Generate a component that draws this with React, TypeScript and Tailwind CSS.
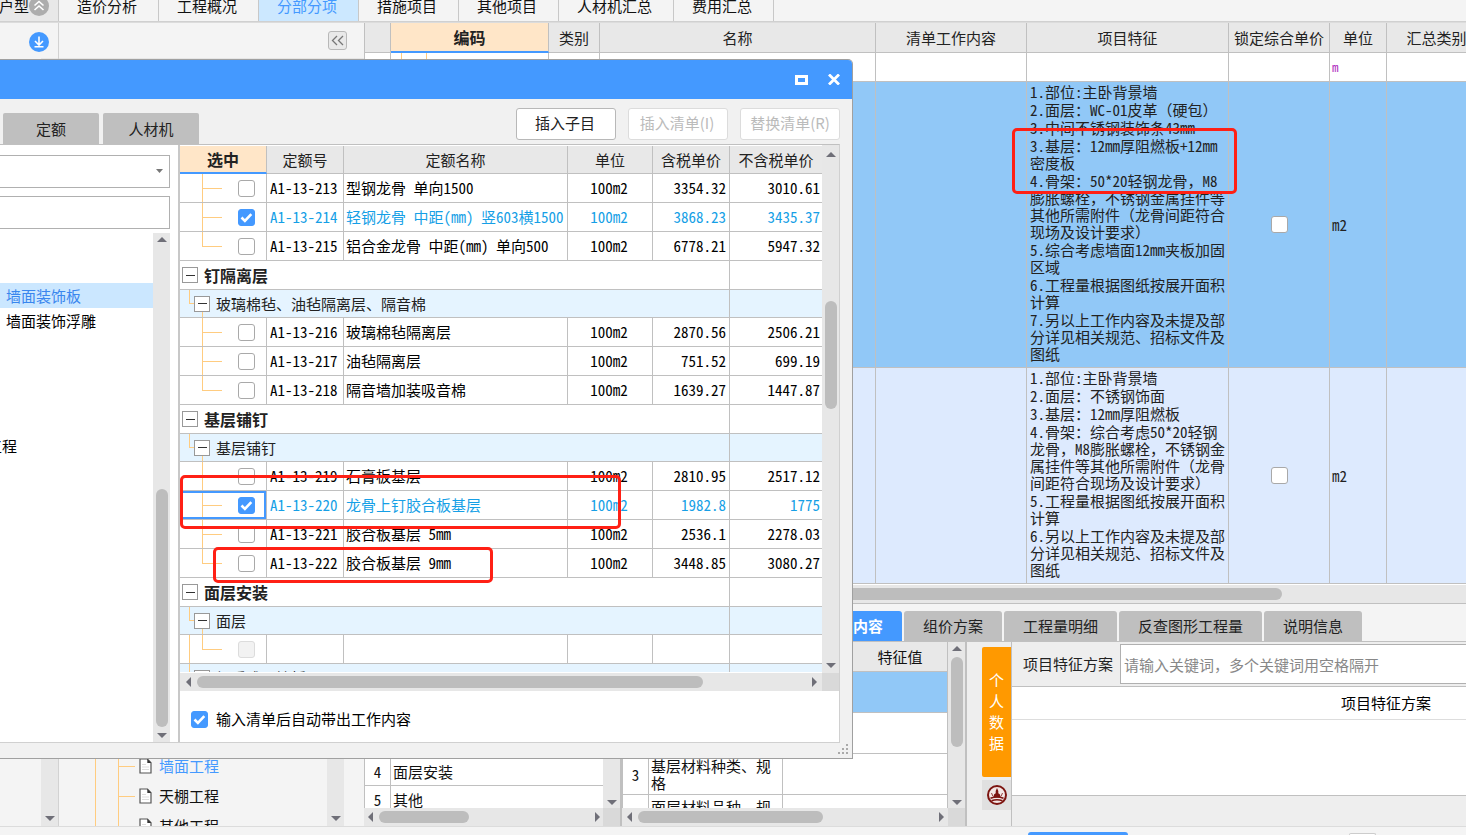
import { useState, type ReactNode } from 'react';
import clsx from 'clsx';

type Dir = 'up' | 'down' | 'left' | 'right';

const arrowPoints: Record<Dir, string> = {
  up: '0,8 5,3 10,8',
  down: '0,3 5,8 10,3',
  left: '8,0 3,5 8,10',
  right: '3,0 8,5 3,10',
};

function Arrow({ dir }: { dir: Dir }) {
  return (
    <svg className="size-[10px] shrink-0" viewBox="0 0 10 10" aria-hidden="true">
      <polygon points={arrowPoints[dir]} fill="#6f6f78" />
    </svg>
  );
}

function VScroll({ className, thumb, children }: { className?: string; thumb?: string; children?: ReactNode }) {
  return (
    <div className={clsx('flex w-[17px] shrink-0 flex-col items-center bg-[#e7e7e7] py-px', className)}>
      <Arrow dir="up" />
      <div className="flex flex-1 flex-col">
        {thumb && <div className={clsx('w-3 rounded-full bg-[#bdbdbd]', thumb)} />}
        {children}
      </div>
      <Arrow dir="down" />
    </div>
  );
}

function HScroll({ thumb, pad = 'px-[3px]', end = true }: { thumb: string; pad?: string; end?: boolean }) {
  return (
    <div className={clsx('flex h-[18px] flex-1 items-center gap-1 bg-[#e7e7e7]', pad)}>
      <Arrow dir="left" />
      <div className="flex-1">
        <div className={clsx('h-3 rounded-full bg-[#bdbdbd]', thumb)} />
      </div>
      {end && <Arrow dir="right" />}
    </div>
  );
}

function Checkbox({ id, label, checked, disabled }: { id?: string; label?: string; checked?: boolean; disabled?: boolean }) {
  const [on, setOn] = useState(!!checked);
  return (
    <span className="relative block size-[17px] shrink-0">
      <input
        id={id}
        type="checkbox"
        aria-label={label}
        checked={on}
        disabled={disabled}
        onChange={() => setOn(!on)}
        className="block size-[17px] appearance-none rounded-[3px] border border-[#a9a9a9] bg-white checked:border-[#4499ff] checked:bg-[#4499ff] disabled:border-[#dcdcdc] disabled:bg-[#f2f2f2]"
      />
      {on && (
        <svg className="pointer-events-none absolute inset-0 size-[17px]" viewBox="0 0 17 17" fill="none" stroke="#fff" strokeWidth="2.6">
          <path d="M3.5 8.5l3.4 3.4 6.4-6.8" />
        </svg>
      )}
    </span>
  );
}

const topTabs = ['造价分析', '工程概况', '分部分项', '措施项目', '其他项目', '人材机汇总', '费用汇总'];

function TopTabs() {
  return (
    <nav className="flex h-[22px] shrink-0 items-end overflow-hidden border-b border-[#d0d0d0]">
      <div className="flex h-[30px] w-[59px] shrink-0 items-center justify-end border-r border-[#c8c8c8] bg-[#e8e8e8] pr-[9px]">
        <span className="whitespace-nowrap">户型</span>
        <svg className="size-5 shrink-0" viewBox="0 0 20 20" fill="none">
          <circle cx="10" cy="10" r="10" fill="#adadad" />
          <path d="M5.5 9.5L10 5.5l4.5 4M5.5 14l4.5-4 4.5 4" stroke="#fff" strokeWidth="1.6" />
        </svg>
      </div>
      {topTabs.map((t) => (
        <a
          key={t}
          href="#"
          className={clsx(
            'flex h-[30px] shrink-0 items-center border-r border-[#c8c8c8] px-[18px]',
            t === '分部分项' ? 'bg-[#cce8ff] text-[#4499ff]' : 'bg-[#f4f4f4]',
          )}
        >
          <span className={t.length === 5 ? 'w-[78px]' : 'w-[63px]'}>{t}</span>
        </a>
      ))}
    </nav>
  );
}

function FileIcon() {
  return (
    <svg className="h-4 w-[13px] shrink-0" viewBox="0 0 13 16" fill="none">
      <path d="M1 1h7.5L12 4.8V15H1z" fill="#fff" stroke="#555" strokeWidth="1.2" />
      <path d="M8.3 1v4h3.9z" fill="#333" />
      <path d="M3 6.5h4M3 9h7M3 11.5h7" stroke="#ddd" />
    </svg>
  );
}

function SideRail() {
  return (
    <div className="flex w-[59px] shrink-0 flex-col border-r border-[#d2d2d2]">
      <button aria-label="下载" className="mt-[9px] ml-[29px] size-5">
        <svg viewBox="0 0 20 20" fill="none">
          <circle cx="10" cy="10" r="10" fill="#4499ff" />
          <path d="M10 4.5v8M6 9l4 4 4-4M5.5 14.8h9" stroke="#fff" strokeWidth="1.6" />
        </svg>
      </button>
      <VScroll className="mt-[6px] flex-1 self-end pb-[3px]" />
    </div>
  );
}

const projectTree = ['墙面工程', '天棚工程', '其他工程'];

function ProjectTree() {
  return (
    <aside className="flex w-[305px] shrink-0 flex-col">
      <div className="flex h-9 shrink-0 items-center justify-end border-b border-[#e6e6e6] pr-[17px]">
        <button aria-label="收起" className="flex size-[19px] items-center justify-center rounded-[3px] border border-[#b8b8b8] bg-[#e9e9e9]">
          <svg className="h-[11px] w-[13px]" viewBox="0 0 13 11" fill="none" stroke="#777" strokeWidth="1.3">
            <path d="M6 1L1.5 5.5 6 10M12 1L7.5 5.5 12 10" />
          </svg>
        </button>
      </div>
      <div className="flex min-h-0 flex-1">
        <div className="flex min-w-0 flex-1 flex-col justify-end overflow-hidden pl-[36px]">
          <div className="flex h-[75px] border-l border-[#ffcc80] pl-[22px]">
            <ul className="flex-1 border-l border-[#ffcc80]">
              {projectTree.map((t, i) => (
                <li key={t} className="flex h-[30px] items-center">
                  <span className="mr-1 h-px w-4 bg-[#ffcc80]" />
                  <FileIcon />
                  <a href="#" className={clsx('ml-[7px]', i === 0 && 'text-[#4499ff]')}>{t}</a>
                </li>
              ))}
            </ul>
          </div>
        </div>
        <VScroll className="mr-5 pb-[3px]" />
      </div>
    </aside>
  );
}

const feature1 = [
  '1.部位:主卧背景墙',
  '2.面层：WC-01皮革（硬包）',
  '3.中间不锈钢装饰条43mm',
  '3.基层：12mm厚阻燃板+12mm\n密度板',
  '4.骨架：50*20轻钢龙骨，M8\n膨胀螺栓，不锈钢金属挂件等\n其他所需附件（龙骨间距符合\n现场及设计要求）',
  '5.综合考虑墙面12mm夹板加固\n区域',
  '6.工程量根据图纸按展开面积\n计算',
  '7.另以上工作内容及未提及部\n分详见相关规范、招标文件及\n图纸',
];

const feature2 = [
  '1.部位:主卧背景墙',
  '2.面层：不锈钢饰面',
  '3.基层：12mm厚阻燃板',
  '4.骨架：综合考虑50*20轻钢\n龙骨，M8膨胀螺栓，不锈钢金\n属挂件等其他所需附件（龙骨\n间距符合现场及设计要求）',
  '5.工程量根据图纸按展开面积\n计算',
  '6.另以上工作内容及未提及部\n分详见相关规范、招标文件及\n图纸',
];

function Features({ items }: { items: string[] }) {
  return (
    <div className="flex flex-col gap-px pt-px pl-[3px] leading-[17px] whitespace-pre">
      {items.map((f) => (
        <p key={f}>{f}</p>
      ))}
    </div>
  );
}

const th = 'border-r border-b border-[#c0c0c0] bg-[#e8e8e8] p-0 font-normal';
const td = 'border-r border-b border-[#c0c0c0] p-0';

function BillTable() {
  return (
    <table className="w-[1123px] table-fixed border-separate border-spacing-0 border-l border-[#c0c0c0] text-[#222]">
      <colgroup>
        <col className="w-[26px]" />
        <col className="w-[158px]" />
        <col className="w-[51px]" />
        <col className="w-[276px]" />
        <col className="w-[151px]" />
        <col className="w-[202px]" />
        <col className="w-[101px]" />
        <col className="w-[57px]" />
        <col />
      </colgroup>
      <thead>
        <tr className="h-[30px] whitespace-nowrap">
          <th className={th} />
          <th className="border-r border-b-2 border-r-[#c0c0c0] border-b-[#4499ff] bg-[#ffe6c8] p-0 text-base leading-5 font-bold">编码</th>
          <th className={th}>类别</th>
          <th className={th}>名称</th>
          <th className={th}>清单工作内容</th>
          <th className={th}>项目特征</th>
          <th className={th}>锁定综合单价</th>
          <th className={th}>单位</th>
          <th className={th}>汇总类别</th>
        </tr>
      </thead>
      <tbody className="font-['Noto_Sans_Mono_CJK_SC','Noto_Sans_CJK_SC',monospace]">
        <tr className="h-[29px] bg-white">
          <td className={td} />
          <td className={td}>
            <div className="ml-[10px] h-7 w-[26px] border-x border-[#ffcc80]" />
          </td>
          <td className={td} />
          <td className={td} />
          <td className={td} />
          <td className={td} />
          <td className={td} />
          <td className={clsx(td, 'pl-[2px] text-[13px] leading-4 text-[#b030c0]')}>m</td>
          <td className={td} />
        </tr>
        {[feature1, feature2].map((items, i) => (
          <tr key={i} className={i === 0 ? 'h-[286px] bg-[#91c8f7]' : 'h-[216px] bg-[#ddeafe]'}>
            <td className={td} />
            <td className={td} />
            <td className={td} />
            <td className={td} />
            <td className={td} />
            <td className={clsx(td, 'align-top')}>
              <Features items={items} />
            </td>
            <td className={td}>
              <div className="flex justify-center">
                <Checkbox label="锁定综合单价" />
              </div>
            </td>
            <td className={clsx(td, 'pl-[2px]')}>m2</td>
            <td className={td} />
          </tr>
        ))}
      </tbody>
    </table>
  );
}

const detailTabs = ['特征及内容', '组价方案', '工程量明细', '反查图形工程量', '说明信息'];

function DetailTabs() {
  return (
    <div className="flex h-[38px] shrink-0 items-end gap-[2px] border-b border-[#c0c0c0] pl-[425px]">
      {detailTabs.map((t, i) => (
        <button
          key={t}
          className={clsx(
            'h-[30px] shrink-0 rounded-t-[3px] px-[19px]',
            i === 0 ? 'bg-[#4499ff] font-bold text-white' : 'bg-[#bfbfbf] text-[#222]',
          )}
        >
          {t}
        </button>
      ))}
    </div>
  );
}

function WorkPanel() {
  const rows = ['', '', '', '面层安装', '其他'];
  return (
    <div className="flex w-[258px] shrink-0 flex-col border-r-2 border-[#c0c0c0]">
      <div className="flex min-h-0 flex-1">
        <div className="min-w-0 flex-1 overflow-hidden bg-white">
          <table className="w-full table-fixed border-separate border-spacing-0 border-l border-[#c0c0c0]">
            <thead>
              <tr className="h-8">
                <th className={clsx(th, 'w-[26px]')} />
                <th className={th} />
              </tr>
            </thead>
            <tbody className="font-['Noto_Sans_Mono_CJK_SC','Noto_Sans_CJK_SC',monospace]">
              {rows.map((r, i) => (
                <tr key={i} className="h-7">
                  <td className={clsx(td, 'text-center')}>{r && i + 1}</td>
                  <td className="border-b border-[#c0c0c0] p-0 pl-[2px]">{r}</td>
                </tr>
              ))}
            </tbody>
          </table>
        </div>
        <VScroll />
      </div>
      <div className="flex">
        <HScroll thumb="w-[90px]" pad="px-px" />
        <div className="w-[17px] bg-[#d9d9d9]" />
      </div>
    </div>
  );
}

function FeaturePanel() {
  const rows = ['', '', '基层材料种类、规格', '面层材料品种、规格'];
  return (
    <div className="flex w-[345px] shrink-0 flex-col border-r-2 border-[#c0c0c0]">
      <div className="flex min-h-0 flex-1">
        <div className="min-w-0 flex-1 overflow-hidden bg-white">
          <table className="w-full table-fixed border-separate border-spacing-0 border-l border-[#c0c0c0]">
            <thead>
              <tr className="h-[30px]">
                <th className={clsx(th, 'w-[26px]')} />
                <th className={clsx(th, 'w-[134px]')} />
                <th className={clsx(th, 'pl-[70px]')}>特征值</th>
              </tr>
            </thead>
            <tbody className="font-['Noto_Sans_Mono_CJK_SC','Noto_Sans_CJK_SC',monospace] leading-[17px]">
              {rows.map((r, i) => (
                <tr key={i} className={clsx('h-[41px]', i === 0 && 'bg-[#91c8f7]')}>
                  <td className={clsx(td, 'text-center')}>{r && i + 1}</td>
                  <td className={clsx(td, 'pr-[2px] pl-[2px]')}>{r}</td>
                  <td className={td} />
                </tr>
              ))}
            </tbody>
          </table>
        </div>
        <VScroll thumb="mt-1 h-[90px]" />
      </div>
      <div className="flex">
        <HScroll thumb="w-[185px]" pad="px-[2px]" />
        <div className="w-[17px] bg-[#d9d9d9]" />
      </div>
    </div>
  );
}

function PlanPanel() {
  return (
    <div className="flex min-w-0 flex-1 bg-[#eee]">
      <div className="flex w-[45px] shrink-0 flex-col items-end gap-[3px] border-r border-[#c0c0c0] pt-[5px]">
        <button className="flex h-[130px] w-[29px] flex-col items-center justify-center rounded-l-[2px] bg-[#ff9900] pb-[2px] leading-[21px] text-white">
          {['个', '人', '数', '据'].map((c) => (
            <span key={c}>{c}</span>
          ))}
        </button>
        <button aria-label="数据库" className="flex h-[30px] w-[29px] items-center justify-center bg-[#e0e0e0]">
          <svg className="size-5" viewBox="0 0 20 20" fill="none">
            <circle cx="10" cy="10" r="9" fill="#f3e6e4" stroke="#7c1410" strokeWidth="2" />
            <path d="M10 3l1.3 3v2.2l1.5 1 1 3.300H6.200l1-3.300 1.500-1V6z" fill="#7c1410" />
            <path d="M3.500 13.200c4-1.600 9-1.600 13 0M4.500 15.800c3.500-1.400 7.500-1.400 11 0" stroke="#7c1410" strokeWidth="1.5" />
            <path d="M4.500 8l1.300 3M15.500 8l-1.300 3" stroke="#7c1410" strokeWidth="0.8" />
          </svg>
        </button>
      </div>
      <div className="flex min-w-0 flex-1 flex-col">
        <div className="flex h-[45px] shrink-0 items-center border-b border-[#c0c0c0] pl-[11px]">
          <label htmlFor="plan-key" className="shrink-0 text-[#222]">项目特征方案</label>
          <input
            id="plan-key"
            placeholder="请输入关键词，多个关键词用空格隔开"
            className="ml-[7px] h-10 min-w-0 flex-1 border border-r-0 border-[#b0b0b0] bg-white px-[3px] placeholder:text-[#888]"
          />
        </div>
        <div className="min-h-0 flex-1 overflow-hidden border-b border-[#c0c0c0] bg-white">
          <h3 className="flex h-[33px] w-[748px] items-center justify-center border-b border-[#ddd] text-black">
            项目特征方案
          </h3>
        </div>
        <div className="h-[30px] shrink-0" />
      </div>
    </div>
  );
}

type Row =
  | { kind: 'group' | 'sub'; name: string }
  | { kind: 'item'; code: string; name: string; unit: string; tax: string; net: string; on?: boolean; focus?: boolean; last?: boolean; off?: boolean };

const item = (code: string, name: string, tax: string, net: string, extra = {}): Row => ({
  kind: 'item', code, name, unit: '100m2', tax, net, ...extra,
});

const quotas: Row[] = [
  item('A1-13-213', '型钢龙骨 单向1500', '3354.32', '3010.61'),
  item('A1-13-214', '轻钢龙骨 中距(mm) 竖603横1500', '3868.23', '3435.37', { on: true }),
  item('A1-13-215', '铝合金龙骨 中距(mm) 单向500', '6778.21', '5947.32', { last: true }),
  { kind: 'group', name: '钉隔离层' },
  { kind: 'sub', name: '玻璃棉毡、油毡隔离层、隔音棉' },
  item('A1-13-216', '玻璃棉毡隔离层', '2870.56', '2506.21'),
  item('A1-13-217', '油毡隔离层', '751.52', '699.19'),
  item('A1-13-218', '隔音墙加装吸音棉', '1639.27', '1447.87', { last: true }),
  { kind: 'group', name: '基层铺钉' },
  { kind: 'sub', name: '基层铺钉' },
  item('A1-13-219', '石膏板基层', '2810.95', '2517.12'),
  item('A1-13-220', '龙骨上钉胶合板基层', '1982.8', '1775', { on: true, focus: true }),
  item('A1-13-221', '胶合板基层 5mm', '2536.1', '2278.03'),
  item('A1-13-222', '胶合板基层 9mm', '3448.85', '3080.27', { last: true }),
  { kind: 'group', name: '面层安装' },
  { kind: 'sub', name: '面层' },
  item('', '', '', '', { unit: '', last: true, off: true }),
  { kind: 'sub', name: '轻质成品墙板' },
];

function Toggle() {
  return (
    <button aria-label="折叠" className="flex size-4 shrink-0 items-center justify-center border border-[#999] bg-white">
      <span className="h-px w-[9px] bg-[#333]" />
    </button>
  );
}

function QuotaRow({ row }: { row: Row }) {
  if (row.kind === 'group') {
    return (
      <tr className="h-[29px] bg-white text-base leading-5 font-bold text-[#222]">
        <td colSpan={5} className={td}>
          <div className="flex items-center gap-[6px] pl-[2px]">
            <Toggle />
            {row.name}
          </div>
        </td>
        <td className="border-b border-[#c0c0c0] p-0" />
      </tr>
    );
  }
  if (row.kind === 'sub') {
    return (
      <tr className="h-7 bg-[#e5f4ff] text-[#222]">
        <td colSpan={5} className={clsx(td, 'relative')}>
          <span className="absolute top-0 left-[9px] h-[14px] w-[6px] border-b border-l border-[#ffcc80]" />
          <span className="absolute top-[14px] bottom-0 left-[22px] w-px bg-[#ffcc80]" />
          <div className="relative flex items-center gap-[6px] pl-[14px]">
            <Toggle />
            {row.name}
          </div>
        </td>
        <td className="border-b border-[#c0c0c0] p-0" />
      </tr>
    );
  }
  return (
    <tr className={clsx('h-[29px] bg-white', row.on ? 'text-[#169fe6]' : 'text-black')}>
      <td className={clsx(td, 'relative')}>
        <span className={clsx('absolute top-0 left-[22px] w-px bg-[#ffcc80]', row.last ? 'h-[14px]' : 'h-full')} />
        <span className="absolute top-[14px] left-[22px] h-px w-5 bg-[#ffcc80]" />
        {row.off && <span className="absolute top-0 left-[9px] h-full w-px bg-[#ffcc80]" />}
        {row.focus && <span className="absolute inset-0 border-2 border-[#4499ff]" />}
        <div className="relative pl-[58px]">
          <Checkbox label={row.code} checked={row.on} disabled={row.off} />
        </div>
      </td>
      <td className={clsx(td, 'pl-[3px]')}>{row.code}</td>
      <td className={clsx(td, 'pl-[2px]')}>{row.name}</td>
      <td className={clsx(td, 'pr-[2px] text-center')}>{row.unit}</td>
      <td className={clsx(td, 'pr-[3px] text-right')}>{row.tax}</td>
      <td className="border-b border-[#c0c0c0] p-0 pr-[2px] text-right">{row.net}</td>
    </tr>
  );
}

function QuotaTable() {
  return (
    <table className="w-full table-fixed border-separate border-spacing-0 whitespace-nowrap">
      <colgroup>
        <col className="w-[87px]" />
        <col className="w-[77px]" />
        <col className="w-[224px]" />
        <col className="w-[85px]" />
        <col className="w-[77px]" />
        <col />
      </colgroup>
      <thead className="text-[#222]">
        <tr className="h-7">
          <th className="border-r border-b-2 border-r-[#c0c0c0] border-b-[#4499ff] bg-[#ffe6c8] p-0 text-base leading-5 font-bold">选中</th>
          <th className={th}>定额号</th>
          <th className={th}>定额名称</th>
          <th className={th}>单位</th>
          <th className={th}>含税单价</th>
          <th className="border-b border-[#c0c0c0] bg-[#e8e8e8] p-0 font-normal">不含税单价</th>
        </tr>
      </thead>
      <tbody className="font-['Noto_Sans_Mono_CJK_SC','Noto_Sans_CJK_SC',monospace] leading-5">
        {quotas.map((row, i) => (
          <QuotaRow key={i} row={row} />
        ))}
      </tbody>
    </table>
  );
}

const chapters = ['', '', '墙面装饰板', '墙面装饰浮雕', '', '', '', '', '工程'];

function ChapterPane() {
  return (
    <div className="flex w-[178px] shrink-0 flex-col pt-[10px] pr-2">
      <div className="relative">
        <select aria-label="定额库" className="block h-[33px] w-full appearance-none border border-l-0 border-[#b0b0b0] bg-white" />
        <svg className="pointer-events-none absolute top-[14px] right-[7px] h-[5px] w-[7px]" viewBox="0 0 7 5">
          <polygon points="0,0 7,0 3.5,4" fill="#777" />
        </svg>
      </div>
      <input aria-label="查找" className="mt-2 h-[33px] w-full border border-l-0 border-[#b0b0b0] bg-white px-1" />
      <div className="mt-1 flex min-h-0 flex-1">
        <ul className="min-w-0 flex-1 overflow-hidden leading-[25px] whitespace-nowrap text-black">
          {chapters.map((c, i) => (
            <li
              key={i}
              className={clsx('h-[25px]', i === 2 && 'bg-[#cbe7ff] text-[#3a86ee]', i === 8 ? '-ml-[13px]' : 'pl-[6px]')}
            >
              {c}
            </li>
          ))}
        </ul>
        <VScroll className="pb-[2px]" thumb="mt-auto mb-[3px] h-[238px]" />
      </div>
    </div>
  );
}

function QuotaDialog() {
  return (
    <section className="absolute top-[59px] left-0 flex h-[700px] w-[853px] flex-col rounded-tr-[5px] border border-l-0 border-[#a0a0a0] bg-[#f1f1f1]">
      <header className="flex h-[39px] shrink-0 items-center justify-end gap-5 rounded-tr-[4px] bg-[#4499ff] pr-3">
        <button aria-label="最大化" className="h-[10px] w-[13px] border-[3px] border-white" />
        <button aria-label="关闭">
          <svg className="h-[11px] w-3" viewBox="0 0 12 11" stroke="#fff" strokeWidth="2.8">
            <path d="M1 .5l10 10M11 .5l-10 10" />
          </svg>
        </button>
      </header>
      <div className="flex h-[45px] shrink-0 items-end gap-1 pr-3 pl-[3px] text-[#222]">
        <button className="h-[31px] w-24 rounded-t-[2px] bg-[#bfbfbf]">定额</button>
        <button className="h-[31px] w-24 rounded-t-[2px] bg-[#bfbfbf]">人材机</button>
        <div className="mb-1 ml-auto flex gap-3">
          <button className="h-8 w-[100px] rounded-[3px] border border-[#b8b8b8] bg-white pr-[2px] pb-[2px]">插入子目</button>
          <button disabled className="h-8 w-[100px] rounded-[3px] border border-[#dcdcdc] bg-white pr-[2px] pb-[2px] text-[#bbb]">插入清单(I)</button>
          <button disabled className="h-8 w-[100px] rounded-[3px] border border-[#dcdcdc] bg-white pb-[2px] text-[#bbb]">替换清单(R)</button>
        </div>
      </div>
      <div className="mr-3 mb-[15px] flex min-h-0 flex-1 border border-l-0 border-[#d0d0d0] border-t-[#c0c0c0] bg-white">
        <ChapterPane />
        <div className="flex min-w-0 flex-1 flex-col border-l-2 border-[#c8c8c8]">
          <div className="flex min-h-0 flex-1">
            <div className="mb-px min-w-0 flex-1 overflow-hidden pt-px">
              <QuotaTable />
            </div>
            <VScroll className="pt-1 pb-[3px]" thumb="mt-[142px] h-[108px]" />
          </div>
          <div className="flex">
            <HScroll thumb="w-[506px]" />
            <div className="w-[17px] bg-[#d9d9d9]" />
          </div>
          <div className="flex h-[51px] shrink-0 items-center gap-2 pt-[5px] pl-[11px] text-black">
            <Checkbox id="auto-work" checked />
            <label htmlFor="auto-work">输入清单后自动带出工作内容</label>
          </div>
        </div>
      </div>
      <svg className="absolute right-1 bottom-1 size-[10px]" viewBox="0 0 10 10" fill="#aaa">
        <path d="M8 0h2v2H8zM8 4h2v2H8zM4 4h2v2H4zM8 8h2v2H8zM4 8h2v2H4zM0 8h2v2H0z" />
      </svg>
    </section>
  );
}

export default function App() {
  return (
    <div className="relative flex h-screen flex-col overflow-hidden bg-[#f4f4f4] font-['Noto_Sans_CJK_SC',sans-serif] text-[15px] leading-5 text-[#111]">
      <TopTabs />
      <div className="flex min-h-0 flex-1 border-y border-[#dcdcdc]">
        <SideRail />
        <ProjectTree />
        <main className="flex min-w-0 flex-1 flex-col overflow-hidden">
          <div className="min-h-0 flex-1 overflow-hidden bg-white">
            <BillTable />
          </div>
          <div className="flex shrink-0 border-b border-[#c0c0c0]">
            <HScroll thumb="ml-[300px] w-[601px]" end={false} />
          </div>
          <DetailTabs />
          <div className="flex h-[184px] shrink-0">
            <WorkPanel />
            <FeaturePanel />
            <PlanPanel />
          </div>
        </main>
      </div>
      <footer className="flex h-2 shrink-0 items-end overflow-hidden pl-[1028px]">
        <div className="h-[3px] w-[100px] rounded-t-[3px] bg-[#4499ff]" />
        <div className="ml-[221px] h-[2px] w-[27px] rounded-t-[2px] border border-b-0 border-[#ccc] bg-white" />
      </footer>

      <QuotaDialog />

      {/* review marks drawn over the window */}
      <div className="pointer-events-none absolute top-[475px] left-[180px] h-[54px] w-[441px] rounded-[5px] border-[3px] border-[#ff2015]" />
      <div className="pointer-events-none absolute top-[547px] left-[213px] h-9 w-[280px] rounded-[5px] border-[3px] border-[#ff2015]" />
      <div className="pointer-events-none absolute top-[128px] left-[1012px] h-[66px] w-[225px] rounded-[5px] border-[3px] border-[#ff2015]" />
    </div>
  );
}
